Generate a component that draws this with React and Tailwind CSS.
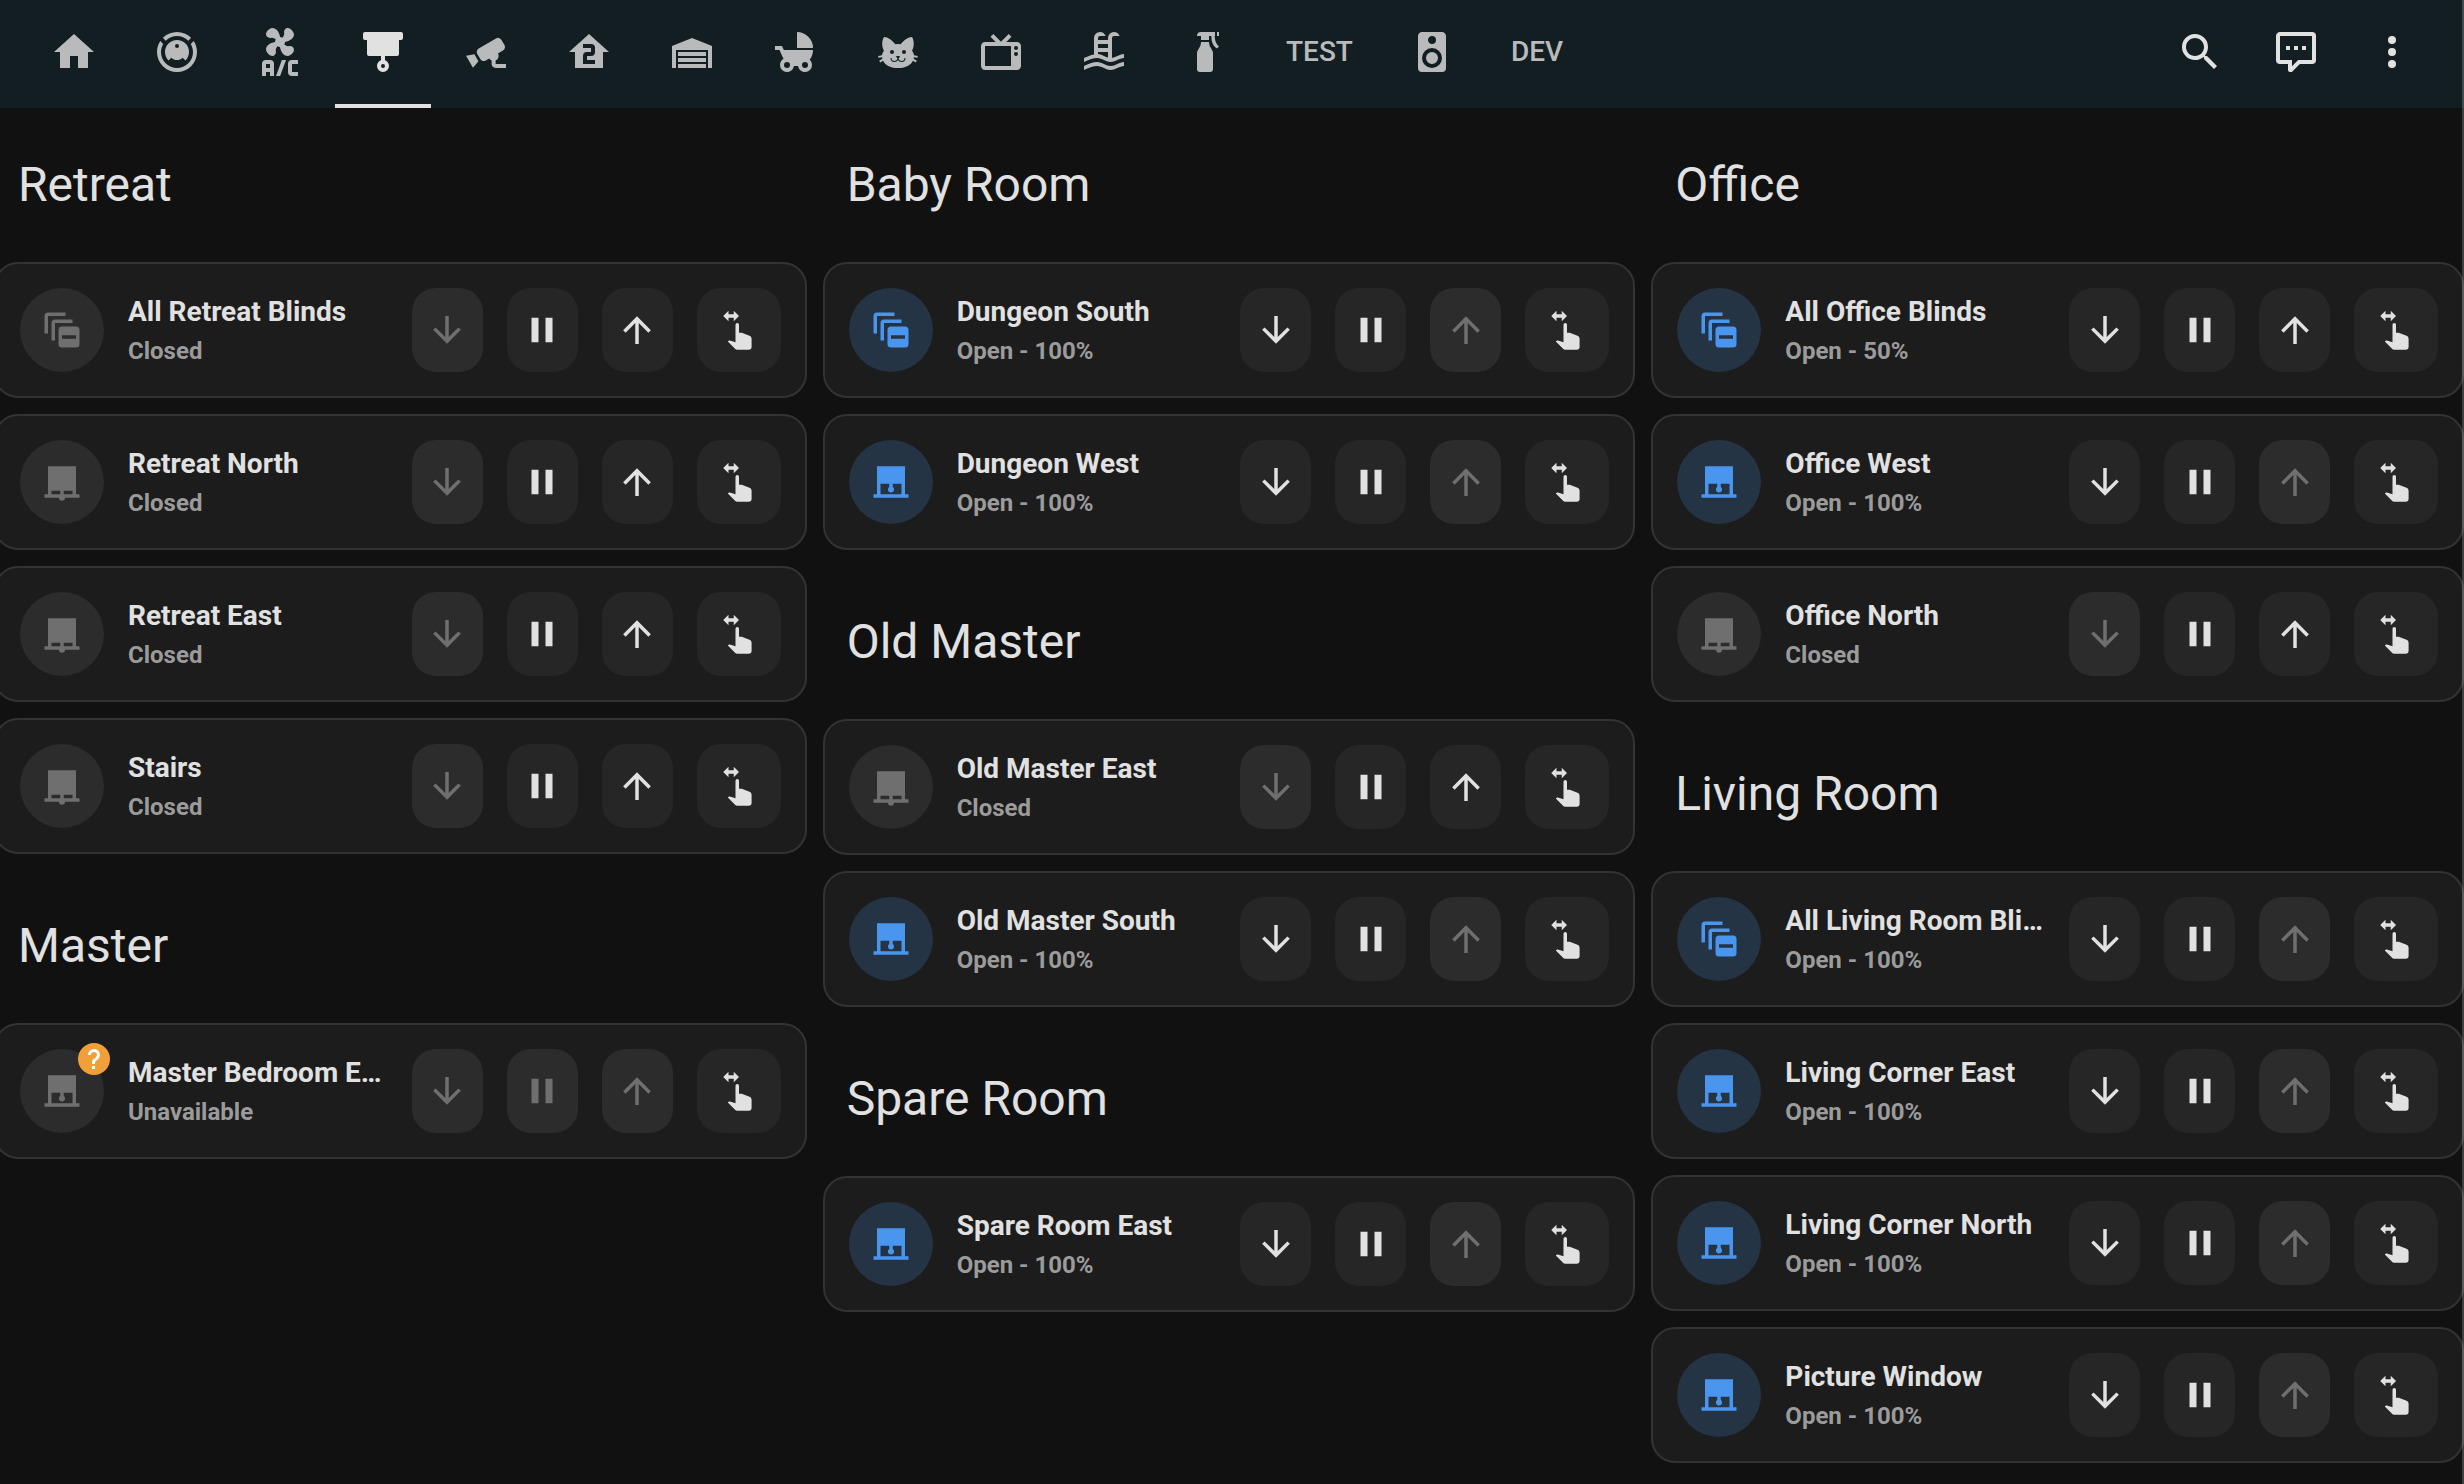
const P = {
  home: "M10,20V14H14V20H19V12H22L12,3L2,12H5V20H10Z",
  vacuum:
    "M12,2C14.65,2 17.19,3.06 19.07,4.93L17.65,6.35C16.15,4.85 14.12,4 12,4C9.88,4 7.84,4.84 6.35,6.35L4.93,4.93C6.81,3.06 9.35,2 12,2M3.66,6.5L5.11,7.94C4.39,9.17 4,10.57 4,12A8,8 0 0,0 12,20A8,8 0 0,0 20,12C20,10.57 19.61,9.17 18.88,7.94L20.34,6.5C21.42,8.12 22,10.04 22,12A10,10 0 0,1 12,22A10,10 0 0,1 2,12C2,10.04 2.58,8.12 3.66,6.5M12,6A6,6 0 0,1 18,12C18,13.59 17.37,15.12 16.24,16.24L14.83,14.83C14.08,15.58 13.06,16 12,16C10.94,16 9.92,15.58 9.17,14.83L7.76,16.24C6.63,15.12 6,13.59 6,12A6,6 0 0,1 12,6M12,8A1,1 0 0,0 11,9A1,1 0 0,0 12,10A1,1 0 0,0 13,9A1,1 0 0,0 12,8Z",
  ac: "M6.59,0.66C8.93,-1.15 11.47,1.06 12.04,4.5C12.47,4.5 12.89,4.62 13.27,4.84C13.79,4.24 14.25,3.42 14.07,2.5C13.65,0.35 16.06,-1.39 18.35,1.58C20.16,3.92 17.95,6.46 14.5,7.03C14.5,7.46 14.39,7.89 14.16,8.27C14.76,8.78 15.58,9.24 16.5,9.06C18.63,8.64 20.38,11.04 17.41,13.34C15.07,15.15 12.53,12.94 11.96,9.5C11.53,9.5 11.11,9.37 10.74,9.15C10.22,9.75 9.75,10.58 9.93,11.5C10.35,13.64 7.94,15.39 5.65,12.42C3.83,10.07 6.05,7.53 9.5,6.97C9.5,6.54 9.63,6.12 9.85,5.74C9.25,5.23 8.43,4.76 7.5,4.94C5.37,5.36 3.62,2.96 6.59,0.66M5,16H7A2,2 0 0,1 9,18V24H7V22H5V24H3V18A2,2 0 0,1 5,16M5,18V20H7V18H5M12.93,16H15L12.07,24H10L12.93,16M18,16H21V18H18V22H21V24H18A2,2 0 0,1 16,22V18A2,2 0 0,1 18,16Z",
  blinds:
    "M3,2H21A1,1 0 0,1 22,3V5A1,1 0 0,1 21,6H20V13A1,1 0 0,1 19,14H13V16.17C14.17,16.58 15,17.69 15,19A3,3 0 0,1 12,22A3,3 0 0,1 9,19C9,17.69 9.83,16.58 11,16.17V14H5A1,1 0 0,1 4,13V6H3A1,1 0 0,1 2,5V3A1,1 0 0,1 3,2M12,18A1,1 0 0,0 11,19A1,1 0 0,0 12,20A1,1 0 0,0 13,19A1,1 0 0,0 12,18Z",
  cctv: "M18.15,4.94C17.77,4.91 17.37,5 17,5.2L8.35,10.2C7.39,10.76 7.07,12 7.62,12.94L9.12,15.53C9.67,16.5 10.89,16.82 11.85,16.27L13.65,15.23C13.92,15.69 14.32,16.06 14.81,16.27V18.04C14.81,19.13 15.7,20 16.81,20H22V18.04H16.81V16.27C17.72,15.87 18.31,14.97 18.31,14C18.31,13.54 18.19,13.11 17.97,12.73L20.5,11.27C21.47,10.71 21.8,9.5 21.24,8.53L19.74,5.94C19.4,5.34 18.79,5 18.15,4.94M6.22,13.17L2,13.87L2.75,15.17L4.75,18.63L5.5,19.93L8.22,16.63L6.22,13.17Z",
  floor2:
    "M12,3L2,12H5V20H19V12H22L12,3M9,8H13A2,2 0 0,1 15,10V12A2,2 0 0,1 13,14H11V16H15V18H9V14A2,2 0 0,1 11,12H13V10H9V8Z",
  garage:
    "M22 9V20H20V11H4V20H2V9L12 5L22 9M19 12H5V14H19V12M19 18H5V20H19V18M19 15H5V17H19V15Z",
  stroller:
    "M13,2V10H21A8,8 0 0,0 13,2M19.32,15.89C20.37,14.54 21,12.84 21,11H6.44L5.49,9H2V11H4.22C4.22,11 6.11,15.07 6.34,15.42C5.24,16 4.5,17.17 4.5,18.5A3.5,3.5 0 0,0 8,22C9.76,22 11.22,20.7 11.46,19H13.54C13.78,20.7 15.24,22 17,22A3.5,3.5 0 0,0 20.5,18.5C20.5,17.46 20.04,16.53 19.32,15.89M8,20A1.5,1.5 0 0,1 6.5,18.5A1.5,1.5 0 0,1 8,17A1.5,1.5 0 0,1 9.5,18.5A1.5,1.5 0 0,1 8,20M17,20A1.5,1.5 0 0,1 15.5,18.5A1.5,1.5 0 0,1 17,17A1.5,1.5 0 0,1 18.5,18.5A1.5,1.5 0 0,1 17,20Z",
  cat: "M12,8L10.67,8.09C9.81,7.07 7.4,4.5 5,4.5C5,4.5 3.03,7.46 4.96,11.41C4.41,12.24 4.07,12.67 4,13.66L2.07,13.95L2.28,14.93L4.04,14.67L4.18,15.38L2.61,16.32L3.08,17.21L4.53,16.32C5.68,18.76 8.59,20 12,20C15.41,20 18.32,18.76 19.47,16.32L20.92,17.21L21.39,16.32L19.82,15.38L19.96,14.67L21.72,14.93L21.93,13.95L20,13.66C19.93,12.67 19.59,12.24 19.04,11.41C20.97,7.46 19,4.5 19,4.5C16.6,4.5 14.19,7.07 13.33,8.09L12,8M9,11A1,1 0 0,1 10,12A1,1 0 0,1 9,13A1,1 0 0,1 8,12A1,1 0 0,1 9,11M15,11A1,1 0 0,1 16,12A1,1 0 0,1 15,13A1,1 0 0,1 14,12A1,1 0 0,1 15,11M11,14H13L12.3,15.39C12.5,16.03 13.06,16.5 13.75,16.5A1.5,1.5 0 0,0 15.25,15H15.75A2,2 0 0,1 13.75,17C13,17 12.35,16.59 12,16V16H12C11.65,16.59 11,17 10.25,17A2,2 0 0,1 8.25,15H8.75A1.5,1.5 0 0,0 10.25,16.5C10.94,16.5 11.5,16.03 11.7,15.39L11,14Z",
  tv: "M8.16,3L6.75,4.41L9.34,7H4C2.89,7 2,7.89 2,9V19C2,20.11 2.89,21 4,21H20C21.11,21 22,20.11 22,19V9C22,7.89 21.11,7 20,7H14.66L17.25,4.41L15.84,3L12,6.84L8.16,3M4,9H17V19H4V9M19.5,9A1,1 0 0,1 20.5,10A1,1 0 0,1 19.5,11A1,1 0 0,1 18.5,10A1,1 0 0,1 19.5,9M19.5,12A1,1 0 0,1 20.5,13A1,1 0 0,1 19.5,14A1,1 0 0,1 18.5,13A1,1 0 0,1 19.5,12Z",
  pool: "M2,15C3.67,14.25 5.33,13.5 7,13.25V5A3,3 0 0,1 10,2C11.31,2 12.42,2.83 12.83,4H10A1,1 0 0,0 9,5V6H14V5A3,3 0 0,1 17,2C18.31,2 19.42,2.83 19.83,4H17A1,1 0 0,0 16,5V14.94C18,14.62 20,13 22,13V15C19.78,15 17.56,17 15.33,17C13.11,17 10.89,15 8.67,15C6.44,15 4.22,16 2,17V15M14,8H9V10H14V8M14,12H9V13C10.67,13.16 12.33,14.31 14,14.79V12M2,19C4.22,18 6.44,17 8.67,17C10.89,17 13.11,19 15.33,19C17.56,19 19.78,17 22,17V19C19.78,19 17.56,21 15.33,21C13.11,21 10.89,19 8.67,19C6.44,19 4.22,20 2,21V19Z",
  spray:
    "M7,12.5V20.5A1.5,1.5 0 0,0 8.5,22H13.5A1.5,1.5 0 0,0 15,20.5V12.5C15,10.8 13,9.8 13,7H9C9,9.8 7,10.8 7,12.5M9,6H13V4H14.2C14.2,7 15,9 17,10.2L18,9.2C16.5,8 16,6.5 15.8,4H16V2H9A2,2 0 0,0 7,4H9V6M17,2H18V4H17V2Z",
  speaker:
    "M12,12A3,3 0 0,0 9,15A3,3 0 0,0 12,18A3,3 0 0,0 15,15A3,3 0 0,0 12,12M12,20A5,5 0 0,1 7,15A5,5 0 0,1 12,10A5,5 0 0,1 17,15A5,5 0 0,1 12,20M12,4A2,2 0 0,1 14,6A2,2 0 0,1 12,8C10.89,8 10,7.1 10,6C10,4.89 10.89,4 12,4M17,2H7C5.89,2 5,2.89 5,4V20A2,2 0 0,0 7,22H17A2,2 0 0,0 19,20V4C19,2.89 18.1,2 17,2Z",
  search:
    "M9.5,3A6.5,6.5 0 0,1 16,9.5C16,11.11 15.41,12.59 14.44,13.73L14.71,14H15.5L20.5,19L19,20.5L14,15.5V14.71L13.73,14.44C12.59,15.41 11.11,16 9.5,16A6.5,6.5 0 0,1 3,9.5A6.5,6.5 0 0,1 9.5,3M9.5,5C7,5 5,7 5,9.5C5,12 7,14 9.5,14C12,14 14,12 14,9.5C14,7 12,5 9.5,5Z",
  comment:
    "M9,22A1,1 0 0,1 8,21V18H4A2,2 0 0,1 2,16V4C2,2.89 2.9,2 4,2H20A2,2 0 0,1 22,4V16A2,2 0 0,1 20,18H13.9L10.2,21.71C10,21.9 9.75,22 9.5,22V22H9M10,16V19.08L13.08,16H20V4H4V16H10M17,11H15V9H17V11M13,11H11V9H13V11M9,11H7V9H9V11Z",
  dots: "M12,16A2,2 0 0,1 14,18A2,2 0 0,1 12,20A2,2 0 0,1 10,18A2,2 0 0,1 12,16M12,10A2,2 0 0,1 14,12A2,2 0 0,1 12,14A2,2 0 0,1 10,12A2,2 0 0,1 12,10M12,4A2,2 0 0,1 14,6A2,2 0 0,1 12,8A2,2 0 0,1 10,6A2,2 0 0,1 12,4Z",
  group:
    "M4,2A2,2 0 0,0 2,4V14H4V4H14V2H4M8,6A2,2 0 0,0 6,8V18H8V8H18V6H8M12,10A2,2 0 0,0 10,12V20A2,2 0 0,0 12,22H20A2,2 0 0,0 22,20V12A2,2 0 0,0 20,10H12M12,15H20V17H12V15Z",
  closed:
    "M20 19V3H4V19H2V21H10.25C10.25 21.97 11.03 22.75 12 22.75S13.75 21.97 13.75 21H22V19H20M6 19V17H11V19H6M13 19V17H18V19H13Z",
  open: "M20 19V3H4V19H2V21H22V19H20M6 19V13H11V14.8C10.55 15.1 10.25 15.65 10.25 16.25C10.25 17.22 11.03 18 12 18S13.75 17.22 13.75 16.25C13.75 15.65 13.45 15.1 13 14.8V13H18V19H6Z",
  down: "M11,4H13V16L18.5,10.5L19.92,11.92L12,19.84L4.08,11.92L5.5,10.5L11,16V4Z",
  up: "M13,20H11V8L5.5,13.5L4.08,12.08L12,4.16L19.92,12.08L18.5,13.5L13,8V20Z",
  pause: "M14,19H18V5H14M6,19H10V5H6V19Z",
  swipe:
    "M6 1L3 4L6 7V5H9V7L12 4L9 1V3H6V1M11 8A1 1 0 0 0 10 9V19L6.8 18Q6 17.9 5.6 18.6L9.6 22.6Q10.2 23.3 11 23.3H17.5A1.7 1.7 0 0 0 19.2 21.6V17Q19.2 15.7 18 15.3L13.6 13.5H12V9A1 1 0 0 0 11 8Z",
  question:
    "M10,19H13V22H10V19M12,2C17.35,2.22 19.68,7.62 16.5,11.67C15.67,12.67 14.33,13.33 13.67,14.17C13,15 13,16 13,17H10C10,15.33 10,13.92 10.67,12.92C11.33,11.92 12.67,11.33 13.5,10.67C15.92,8.43 15.32,5.26 12,5A3,3 0 0,0 9,8H6A6,6 0 0,1 12,2Z",
};

function Icon({ name, className }) {
  return (
    <svg viewBox="0 0 24 24" fill="currentColor" aria-hidden="true" className={className}>
      <path d={P[name]} />
    </svg>
  );
}

const tabs = [
  { label: "Home", icon: "home" },
  { label: "Vacuum", icon: "vacuum" },
  { label: "Climate", icon: "ac" },
  { label: "Blinds", icon: "blinds", active: true },
  { label: "Cameras", icon: "cctv" },
  { label: "Second floor", icon: "floor2" },
  { label: "Garage", icon: "garage" },
  { label: "Nursery", icon: "stroller" },
  { label: "Cat", icon: "cat" },
  { label: "Television", icon: "tv" },
  { label: "Pool", icon: "pool" },
  { label: "Cleaning", icon: "spray" },
  { label: "TEST" },
  { label: "Speakers", icon: "speaker" },
  { label: "DEV" },
];

const columns = [
  [
    {
      title: "Retreat",
      covers: [
        { name: "All Retreat Blinds", pos: 0, group: true },
        { name: "Retreat North", pos: 0 },
        { name: "Retreat East", pos: 0 },
        { name: "Stairs", pos: 0 },
      ],
    },
    { title: "Master", covers: [{ name: "Master Bedroom East", pos: null }] },
  ],
  [
    {
      title: "Baby Room",
      covers: [
        { name: "Dungeon South", pos: 100, group: true },
        { name: "Dungeon West", pos: 100 },
      ],
    },
    {
      title: "Old Master",
      covers: [
        { name: "Old Master East", pos: 0 },
        { name: "Old Master South", pos: 100 },
      ],
    },
    { title: "Spare Room", covers: [{ name: "Spare Room East", pos: 100 }] },
  ],
  [
    {
      title: "Office",
      covers: [
        { name: "All Office Blinds", pos: 50, group: true },
        { name: "Office West", pos: 100 },
        { name: "Office North", pos: 0 },
      ],
    },
    {
      title: "Living Room",
      covers: [
        { name: "All Living Room Blinds", pos: 100, group: true },
        { name: "Living Corner East", pos: 100 },
        { name: "Living Corner North", pos: 100 },
        { name: "Picture Window", pos: 100 },
      ],
    },
  ],
];

function Control({ icon, label, disabled, wide }) {
  return (
    <button
      type="button"
      aria-label={label}
      disabled={disabled}
      className={`flex h-[84px] shrink-0 items-center justify-center rounded-3xl bg-[#262626] text-[#e1e1e1] disabled:bg-[#2c2c2c] disabled:text-[#6f6f6f] ${wide ? "w-[84px]" : "w-[71px]"}`}
    >
      <Icon name={icon} className="size-[42px]" />
    </button>
  );
}

function CoverCard({ name, pos, group }) {
  const unavailable = pos === null;
  const isOpen = pos > 0;
  const state = unavailable ? "Unavailable" : isOpen ? `Open - ${pos}%` : "Closed";
  const icon = group ? "group" : isOpen || unavailable ? "open" : "closed";
  return (
    <article className="flex items-center gap-6 rounded-3xl border-2 border-[#333333] bg-[#1c1c1c] p-6">
      <div
        className={`relative flex size-[84px] shrink-0 items-center justify-center rounded-full ${isOpen ? "bg-[#253444] text-[#4a95ee]" : "bg-[#2c2c2c] text-[#6f6f6f]"}`}
      >
        <Icon name={icon} className="size-[42px]" />
        {unavailable && (
          <span className="absolute -top-1.5 -right-1.5 flex size-8 items-center justify-center rounded-full bg-[#f19f39] text-white">
            <Icon name="question" className="size-6" />
          </span>
        )}
      </div>
      <div className="min-w-0 flex-1 pt-1">
        <h3 className="truncate text-[28px] leading-[38px] font-bold text-[#e1e1e1]">{name}</h3>
        <p className="truncate text-2xl leading-10 font-bold text-[#9b9b9b]">{state}</p>
      </div>
      <div className="flex gap-6">
        <Control icon="down" label={`Close ${name}`} disabled={unavailable || pos === 0} />
        <Control icon="pause" label={`Stop ${name}`} disabled={unavailable} />
        <Control icon="up" label={`Open ${name}`} disabled={unavailable || pos === 100} />
        <Control icon="swipe" label={`Set position of ${name}`} wide />
      </div>
    </article>
  );
}

export default function App() {
  return (
    <div className="relative min-h-screen overflow-hidden bg-[#111111] font-[Roboto,sans-serif]">
      <header className="flex h-[108px] items-stretch justify-between bg-[#131e22] pr-12 pl-[26px]">
        <nav className="flex gap-[7px]">
          {tabs.map((t) => (
            <a
              key={t.label}
              href="#"
              aria-label={t.label}
              className={`flex items-center border-b-4 px-6 text-[28px] font-medium ${t.active ? "border-[#e1e1e1] text-[#e1e1e1]" : "border-transparent text-[#b8babb]"}`}
            >
              {t.icon ? <Icon name={t.icon} className="size-12" /> : t.label}
            </a>
          ))}
        </nav>
        <div className="flex items-center gap-12 pb-1 text-[#e1e1e1]">
          <button type="button" aria-label="Search">
            <Icon name="search" className="size-12" />
          </button>
          <button type="button" aria-label="Assist">
            <Icon name="comment" className="size-12" />
          </button>
          <button type="button" aria-label="Menu">
            <Icon name="dots" className="size-12" />
          </button>
        </div>
      </header>
      <main className="-ml-1.5 grid grid-cols-3 items-start gap-4 pt-px">
        {columns.map((sections, i) => (
          <div key={i} className="flex min-w-0 flex-col gap-4">
            {sections.map((s) => (
              <section key={s.title} className="flex flex-col gap-4">
                <h2 className="px-6 pt-11 pb-[29px] text-5xl leading-[64px] font-normal text-[#e1e1e1]">
                  {s.title}
                </h2>
                {s.covers.map((c) => (
                  <CoverCard key={c.name} {...c} />
                ))}
              </section>
            ))}
          </div>
        ))}
      </main>
      <div className="absolute inset-y-0 right-0 w-0.5 bg-white/20" />
    </div>
  );
}
